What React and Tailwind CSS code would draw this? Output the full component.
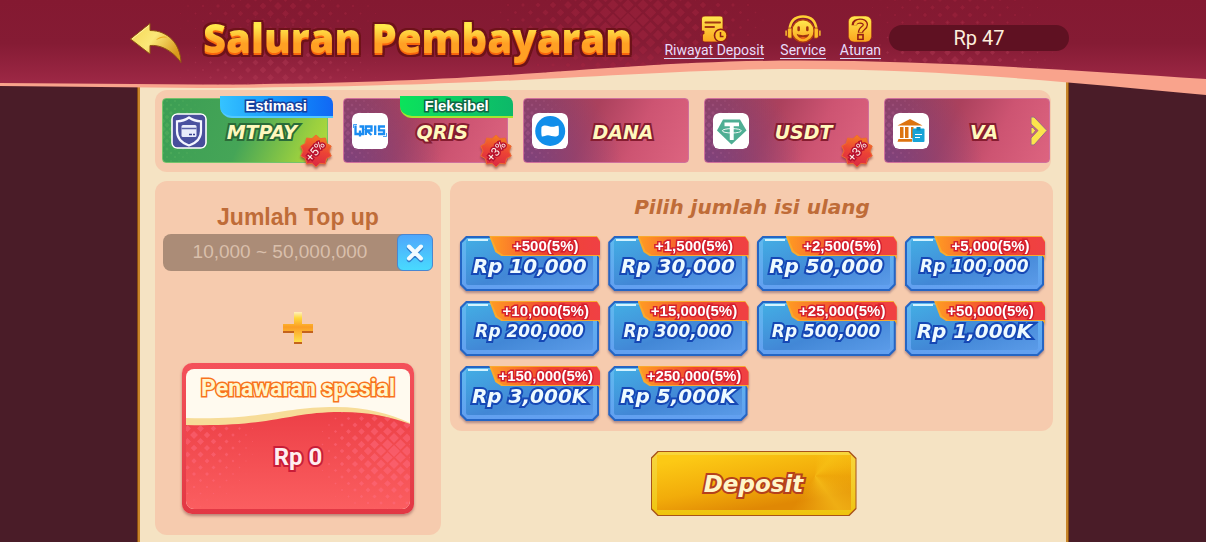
import { useState } from "react";
import clsx from "clsx";

const channels = [
    { name: "MTPAY", icon: ShieldIcon, tag: "Estimasi", bonus: "+5%", active: true },
    { name: "QRIS", icon: QrisIcon, tag: "Fleksibel", bonus: "+3%" },
    { name: "DANA", icon: DanaIcon },
    { name: "USDT", icon: UsdtIcon, bonus: "+3%" },
    { name: "VA", icon: BankIcon },
];

const amounts = [
    { label: "Rp 10,000", bonus: "+500(5%)" },
    { label: "Rp 30,000", bonus: "+1,500(5%)" },
    { label: "Rp 50,000", bonus: "+2,500(5%)" },
    { label: "Rp 100,000", bonus: "+5,000(5%)", small: true },
    { label: "Rp 200,000", bonus: "+10,000(5%)", small: true },
    { label: "Rp 300,000", bonus: "+15,000(5%)", small: true },
    { label: "Rp 500,000", bonus: "+25,000(5%)", small: true },
    { label: "Rp 1,000K", bonus: "+50,000(5%)" },
    { label: "Rp 3,000K", bonus: "+150,000(5%)" },
    { label: "Rp 5,000K", bonus: "+250,000(5%)" },
];

// Diamonds that shrink away from the centre of the cluster
function Diamonds({ cx, cy, rx, ry, step, max, color }) {
    const items = [];
    for (let row = -Math.ceil(ry / step) * 2; row <= Math.ceil(ry / step) * 2; row++) {
        for (let col = -Math.ceil(rx / step); col <= Math.ceil(rx / step); col++) {
            const x = cx + col * step + (row % 2 ? step / 2 : 0);
            const y = cy + (row * step) / 2;
            const r = max * (1 - Math.hypot((x - cx) / rx, (y - cy) / ry));
            if (r > 0.4) {
                items.push(<path key={`${row}:${col}`} d={`M${x} ${y - r}L${x + r} ${y}L${x} ${y + r}L${x - r} ${y}Z`} />);
            }
        }
    }
    return <g fill={color}>{items}</g>;
}

function ShieldIcon() {
    return (
        <svg viewBox="0 0 36 36" className="size-full">
            <rect x="1" y="1" width="34" height="34" rx="5" fill="#484e9b" stroke="#fff" strokeWidth="1.6" />
            <path d="M18 4.5C22 7.3 26 8.2 30 8.4V18C30 25 25.500 30 18 32.500C10.500 30 6 25 6 18V8.400C10 8.200 14 7.300 18 4.500Z" fill="#4a519f" stroke="#f4f5ff" strokeWidth="2.200" />
            <rect x="10.500" y="12" width="15" height="12" rx="1.500" fill="#e9ecfb" />
            <path d="M10.500 15.500H25.500" stroke="#5a61a8" strokeWidth="1.500" />
            <path d="M18 21.500H21M22 21.500H24" stroke="#3a4190" strokeWidth="1.400" />
        </svg>
    );
}

function QrisIcon() {
    return (
        <svg viewBox="0 0 36 36" className="size-full" fill="none" stroke="#1a8cf2">
            <rect width="36" height="36" rx="6" fill="#fff" stroke="none" />
            <path d="M1.500 15V11.500H5M34.500 20V23.500H31" strokeWidth="0.800" />
            <path d="M3.500 12.500V21H11V13.500H7.500M8 17.500V23.500" strokeWidth="2.300" />
            <path d="M13.800 22V13.500H19.500V17.500H14.500L19.500 22" strokeWidth="2.300" />
            <path d="M23.200 12.500V22M33 13.500H27V17.300H32V21H26" strokeWidth="2.300" />
        </svg>
    );
}

function DanaIcon() {
    return (
        <svg viewBox="0 0 36 36" className="size-full">
            <rect width="36" height="36" rx="6" fill="#fff" />
            <circle cx="18.200" cy="18" r="15" fill="#118eea" />
            <path d="M9.500 14C13 10.500 17 13.800 20.500 13.800C23 13.800 25 12.300 26.500 12.800C27 15 27 19.500 26.700 22C23.500 25.300 19.500 22.500 16 22.300C13.500 22.200 11.500 24 9.800 23.500C9.200 21 9.200 17 9.500 14Z" fill="#fff" />
        </svg>
    );
}

function UsdtIcon() {
    return (
        <svg viewBox="0 0 36 36" className="size-full">
            <rect width="36" height="36" rx="6" fill="#fff" />
            <path d="M10 6.500H27L33.500 17.500L18.500 31.500L4 17.500Z" fill="#4fae94" />
            <path d="M11.500 9.500H26V13.300H20.700V27H16.800V13.300H11.500Z" fill="#fff" />
            <ellipse cx="18.800" cy="17.800" rx="9.500" ry="2.200" fill="none" stroke="#fff" strokeWidth="0.900" />
        </svg>
    );
}

function BankIcon() {
    return (
        <svg viewBox="0 0 36 36" className="size-full" fill="#dd730f">
            <rect width="36" height="36" rx="6" fill="#fff" />
            <path d="M17 6L29.500 12.500H4.500Z" />
            <path d="M7 14H10.500V25H7ZM12 14H15.500V25H12ZM18 14H20.500V25H18ZM24 14H27V16H24ZM5.500 26H19V28.800H4.500Z" />
            <rect x="19.500" y="15.500" width="12" height="13.500" rx="1" fill="#17a3d6" />
            <path d="M23.500 14H27.500V17.500H23.500Z" fill="#0e86b8" />
            <path d="M22 21.500H29M22 24.500H27" stroke="#fff" strokeWidth="1" />
        </svg>
    );
}

function GoldGradient({ id }) {
    return (
        <linearGradient id={id} x1="0" y1="0" x2="0" y2="1">
            <stop offset="0" stopColor="#ffe94f" />
            <stop offset="1" stopColor="#fba41d" />
        </linearGradient>
    );
}

function HistoryIcon() {
    return (
        <svg viewBox="0 0 28 28" className="size-7">
            <defs><GoldGradient id="goldHistory" /></defs>
            <path d="M5 1H20C22 1 23 2 23 4V13.500L26 17L25.500 24L21 27H5C3 27 2.500 26 2.500 24V19H4V16H1.500V4C1.500 2 3 1 5 1Z" fill="url(#goldHistory)" stroke="#8a1616" strokeWidth="0.800" />
            <path d="M5.500 7.500H20M5.500 12H14" stroke="#a13a12" strokeWidth="2" strokeLinecap="round" />
            <circle cx="20.800" cy="20.500" r="6.300" fill="#ffc32c" stroke="#8f1f16" strokeWidth="1.600" />
            <path d="M20.500 17V21.500H23.500" fill="none" stroke="#8f1f16" strokeWidth="1.500" />
        </svg>
    );
}

function ServiceIcon() {
    return (
        <svg viewBox="0 0 38 29" className="h-7 w-[38px]">
            <defs><GoldGradient id="goldService" /></defs>
            <path d="M5 15C6 5 12 1.500 19 1.500S32 5 33 15" fill="none" stroke="#ffcf34" strokeWidth="2.600" />
            <circle cx="19" cy="16.500" r="11.500" fill="url(#goldService)" stroke="#b5410e" strokeWidth="1.200" />
            <path d="M5 13.500H7.500V24H5C3.500 24 3 23 3 21.500V16C3 14.500 3.500 13.500 5 13.500ZM33 13.500H30.500V24H33C34.500 24 35 23 35 21.500V16C35 14.500 34.500 13.500 33 13.500Z" fill="#ffbd29" stroke="#8f1f16" strokeWidth="0.700" />
            <path d="M1.500 16V21.500M36.500 16V21.500" stroke="#ffc52e" strokeWidth="1.500" />
            <path d="M14.500 13V15.500M23.500 13V15.500" stroke="#a1330f" strokeWidth="2.600" strokeLinecap="round" />
            <path d="M12.500 19.500C16 21.500 22 21.500 25.500 19.500C24.500 26 13.500 26 12.500 19.500Z" fill="#a1330f" />
            <path d="M15.500 23.500C18 22.500 20 22.500 22.500 23.500L19 25Z" fill="#f0631a" />
        </svg>
    );
}

function RulesIcon() {
    return (
        <svg viewBox="0 0 28 29" className="h-7 w-7">
            <defs><GoldGradient id="goldRules" /></defs>
            <rect x="2" y="1" width="24" height="27" rx="6" fill="url(#goldRules)" stroke="#9c2414" strokeWidth="0.600" />
            <path d="M8 10.500C8 5 19.500 5 19.500 10C19.500 14 14.500 13.500 14.500 18.500" fill="none" stroke="#951f14" strokeWidth="5.600" />
            <path d="M11 19.500H18V26H11Z" fill="#951f14" />
            <path d="M9 10.500C9 5 19.500 5 19.500 10C19.500 14 14.500 13.500 14.500 17.800" fill="none" stroke="#ffc634" strokeWidth="3" />
            <path d="M12.700 21.200H16.300V24.500H12.700Z" fill="#ffb52a" />
        </svg>
    );
}

function NavLink({ icon: Icon, children }) {
    return (
        <a href="#" className="flex flex-col items-center text-[14px] leading-[15px] whitespace-nowrap text-[#e8dcfa]">
            <Icon />
            <span className="border-b border-[#d6daf8]">{children}</span>
        </a>
    );
}

function Header() {
    return (
        <header className="relative z-10 h-24">
            <svg viewBox="0 0 1206 96" preserveAspectRatio="none" className="pointer-events-none absolute inset-0 size-full">
                <defs>
                    <linearGradient id="headerFill" x1="0" y1="0" x2="0" y2="1">
                        <stop offset="0" stopColor="#841931" />
                        <stop offset="0.450" stopColor="#851b34" />
                        <stop offset="1" stopColor="#a52c4b" />
                    </linearGradient>
                    <clipPath id="headerClip">
                        <path d="M0 0H1206V79C1060 69 930 61 800 60.500C600 61 520 84 200 84.500L0 83Z" />
                    </clipPath>
                </defs>
                <path d="M0 0H1206V95C1060 81 930 69 800 69C640 69 520 87 200 88L0 86Z" fill="#f9a38c" />
                <g clipPath="url(#headerClip)">
                    <rect width="1206" height="96" fill="url(#headerFill)" />
                    <g opacity="0.450">
                        <Diamonds cx={278} cy={6} rx={120} ry={60} step={15} max={4} color="#a52640" />
                        <Diamonds cx={278} cy={70} rx={110} ry={60} step={15} max={4} color="#b23a56" />
                        <Diamonds cx={628} cy={20} rx={150} ry={85} step={15} max={7} color="#a52640" />
                        <Diamonds cx={955} cy={15} rx={110} ry={50} step={15} max={3} color="#a52640" />
                        <Diamonds cx={955} cy={60} rx={110} ry={50} step={15} max={4} color="#b23a56" />
                    </g>
                </g>
            </svg>
            <div className="relative mx-auto flex w-full max-w-[946px] items-start pr-[7px]">
                <button type="button" aria-label="Kembali" className="mt-[22px] mr-[21px] shrink-0">
                    <svg viewBox="0 0 52 42" className="h-[42px] w-[52px]">
                        <defs>
                            <linearGradient id="backFill" x1="0" y1="0" x2="1" y2="0.600">
                                <stop offset="0" stopColor="#f3d653" />
                                <stop offset="0.500" stopColor="#fbe878" />
                                <stop offset="1" stopColor="#d99a1c" />
                            </linearGradient>
                        </defs>
                        <path d="M20 1.500L0.500 17L20 32V23.500C30 22.500 42 28 51 40.500C50.500 22 38 8.500 20 8.500Z" fill="url(#backFill)" stroke="#8f5313" strokeWidth="1" />
                        <path d="M26 18C30 14 35 14 37 15.500C31 15 29 17 26 18Z" fill="#eba91c" />
                        <path d="M19 3.500L2 17" stroke="#fff3a0" strokeWidth="1" />
                    </svg>
                </button>
                <h1 className="mt-2.5 bg-linear-to-b from-[#ffe94a] from-30% to-[#ffa024] to-60% bg-clip-text font-['Open_Sans'] text-[40px] leading-[56px] font-extrabold whitespace-nowrap text-transparent [filter:drop-shadow(0_2px_0_#f8660c)_drop-shadow(2px_0_0_#6e1219)_drop-shadow(-2px_0_0_#6e1219)_drop-shadow(0_2px_0_#6e1219)_drop-shadow(0_-2px_0_#6e1219)]">
                    Saluran Pembayaran
                </h1>
                <nav className="mt-[15px] ml-auto flex items-start">
                    <NavLink icon={HistoryIcon}>Riwayat Deposit</NavLink>
                    <div className="w-4" />
                    <NavLink icon={ServiceIcon}>Service</NavLink>
                    <div className="w-[14px]" />
                    <NavLink icon={RulesIcon}>Aturan</NavLink>
                </nav>
                <div className="mt-[25px] ml-2 h-[26px] w-[180px] shrink rounded-full bg-[#5f1122] text-center text-[20px] leading-[26px] text-[#fdeedd]">
                    Rp 47
                </div>
            </div>
        </header>
    );
}

function BonusBadge({ children }) {
    const points = Array.from({ length: 20 }, (_, i) => {
        const r = i % 2 ? 13 : 16;
        const a = (i * Math.PI) / 10;
        return `${17 + r * Math.sin(a)},${17 - r * Math.cos(a)}`;
    }).join(" ");

    return (
        <span className="absolute -right-1.5 -bottom-1.5 grid size-[34px] place-items-center drop-shadow-[0_2px_1px_#7a2a2a90]">
            <svg viewBox="0 0 34 34" className="absolute inset-0 size-full">
                <defs>
                    <linearGradient id="badgeFill" x1="0.600" y1="0" x2="0.400" y2="1">
                        <stop offset="0" stopColor="#f5801f" />
                        <stop offset="0.500" stopColor="#ec4335" />
                        <stop offset="1" stopColor="#d92745" />
                    </linearGradient>
                </defs>
                <polygon points={points} fill="url(#badgeFill)" strokeLinejoin="round" stroke="#ee6a30" strokeWidth="1" />
            </svg>
            <span className="relative -rotate-50 text-[12px] leading-none text-[#fff3ea] [-webkit-text-stroke:3px_#b9122f] [paint-order:stroke_fill]">
                {children}
            </span>
        </span>
    );
}

function ChannelCard({ channel, active, onClick }) {
    const Icon = channel.icon;
    return (
        <button
            type="button"
            onClick={onClick}
            className={clsx(
                "relative flex h-[65px] min-w-0 flex-1 items-center rounded-sm border pl-2 pr-2.5",
                active
                    ? "border-[#74c26a] bg-linear-[115deg,#3c9e54_0%,#45a557_50%,#9bd03f_85%,#b5dd3d_100%]"
                    : "border-[#d0709c] bg-[radial-gradient(circle_at_0%_110%,#7c427d_0%,#7c427d00_55%),linear-gradient(115deg,#95405f_10%,#ab415d_40%,#cd5472_68%,#dd6480_100%)]"
            )}
        >
            <svg viewBox="0 0 60 63" className="absolute bottom-0 left-0 h-full opacity-20">
                <Diamonds cx={0} cy={30} rx={50} ry={50} step={8} max={3} color={active ? "#7fd06f" : "#d67fae"} />
            </svg>
            <span className="relative size-9 shrink-0 overflow-hidden rounded-md">
                <Icon />
            </span>
            <span
                className={clsx(
                    "relative flex-1 pt-0.5 text-center font-['DejaVu_Sans'] text-[19px] leading-6 font-bold text-[#fff8bd] italic [paint-order:stroke_fill]",
                    active ? "[-webkit-text-stroke:4px_#2a6b38]" : "[-webkit-text-stroke:4px_#861c30]"
                )}
            >
                {channel.name}
            </span>
            {channel.tag && (
                <span
                    className={clsx(
                        "absolute -top-[3px] -right-1.5 h-[22px] w-[113px] rounded-tr-lg rounded-bl-xl border-b-2 text-center font-['Liberation_Sans'] text-[15px] leading-5 font-bold text-white [paint-order:stroke_fill]",
                        active
                            ? "border-[#52c8ff] bg-linear-to-r from-[#35c3ff] to-[#1267f4] [-webkit-text-stroke:3px_#153f9d]"
                            : "border-[#a4e62f] bg-linear-to-r from-[#0be35b] to-[#0db869] [-webkit-text-stroke:3px_#0e6743]"
                    )}
                >
                    {channel.tag}
                </span>
            )}
            {channel.bonus && <BonusBadge>{channel.bonus}</BonusBadge>}
        </button>
    );
}

function ChannelBar() {
    const [selected, setSelected] = useState("MTPAY");
    return (
        <section className="relative mr-0.5 flex gap-[15px] rounded-xl bg-[#f6cbae] pt-2 pr-px pb-[9px] pl-[7px]">
            {channels.map((channel) => (
                <ChannelCard
                    key={channel.name}
                    channel={channel}
                    active={selected === channel.name}
                    onClick={() => setSelected(channel.name)}
                />
            ))}
            <button type="button" aria-label="Berikutnya" className="absolute top-[26px] right-[3px]">
                <svg viewBox="0 0 18 30" className="h-[30px] w-[18px]" fill="#fbe44d" stroke="#9a6a86" strokeWidth="1">
                    <path d="M1 1H4L17 14.500L4 29H1V22L8 14.500L1 8Z" />
                    <path d="M1 11.500H3L5.500 14.500L3 18H1Z" />
                </svg>
            </button>
        </section>
    );
}

function TopUpPanel({ value, onChange }) {
    return (
        <section className="rounded-xl bg-[#f6cbae] px-2 pt-[22px] pb-[21px]">
            <label htmlFor="topup" className="block text-center font-['Liberation_Sans'] text-[23px] leading-7 font-bold text-[#bf6c38]">
                Jumlah Top up
            </label>
            <div className="mt-[3px] flex h-[37px] items-stretch rounded-lg bg-[#ab8c77]">
                <input
                    id="topup"
                    value={value}
                    onChange={(e) => onChange(e.target.value)}
                    placeholder="10,000 ~ 50,000,000"
                    className="min-w-0 flex-1 text-center font-['Liberation_Sans'] text-[19px] text-white outline-none placeholder:text-[#d9bfab]"
                />
                <button
                    type="button"
                    aria-label="Hapus"
                    onClick={() => onChange("")}
                    className="grid w-9 place-items-center rounded-md border border-[#4a86d0] bg-linear-to-b from-[#4ea6fb] to-[#48dafe]"
                >
                    <svg viewBox="0 0 20 20" className="size-5" strokeLinecap="round">
                        <path d="M4 5L16 17M16 5L4 17" stroke="#2f7ccb" strokeWidth="4.500" />
                        <path d="M4 3.500L16 15.500M16 3.500L4 15.500" stroke="#f2fbff" strokeWidth="4" />
                    </svg>
                </button>
            </div>
            <svg viewBox="0 0 32 34" className="mx-auto mt-10 h-[34px] w-8">
                <defs>
                    <linearGradient id="plusFill" x1="0" y1="0" x2="0" y2="1">
                        <stop offset="0" stopColor="#fff0c0" />
                        <stop offset="0.200" stopColor="#ffd83c" />
                        <stop offset="0.500" stopColor="#fb9d24" />
                        <stop offset="1" stopColor="#ffe04a" />
                    </linearGradient>
                </defs>
                <path d="M12 3H20V14H31V22H20V33H12V22H1V14H12Z" fill="#c4631c" />
                <path d="M12 1H20V13H31V20H20V31H12V20H1V13H12Z" fill="url(#plusFill)" />
            </svg>
            {/* Special offer */}
            <div className="mx-auto mt-[18px] w-full max-w-[232px] rounded-[10px] bg-linear-to-b from-[#f4515a] to-[#e23844] px-1 pt-1.5 pb-[5px] shadow-[0_2px_3px_#8a4a4a90]">
                <div className="relative flex h-[140px] flex-col items-center overflow-hidden rounded-lg bg-[#fffaef]">
                    <svg viewBox="0 0 224 140" preserveAspectRatio="none" className="absolute inset-0 size-full">
                        <defs>
                            <linearGradient id="offerFill" x1="0" y1="0" x2="0" y2="1">
                                <stop offset="0" stopColor="#ec3f46" />
                                <stop offset="1" stopColor="#fb5e60" />
                            </linearGradient>
                            <clipPath id="offerClip">
                                <path d="M0 56C90 58 100 43 155 43C185 43 205 48 224 55V140H0Z" />
                            </clipPath>
                        </defs>
                        <path d="M0 49C80 51 95 38 150 38C180 38 205 45 224 54V70H0Z" fill="#f7dc98" />
                        <g clipPath="url(#offerClip)">
                            <rect y="40" width="224" height="100" fill="url(#offerFill)" />
                            <g opacity="0.450">
                                <Diamonds cx={208} cy={82} rx={85} ry={75} step={13} max={6} color="#ff6f86" />
                                <Diamonds cx={8} cy={66} rx={70} ry={80} step={13} max={4} color="#ff6f86" />
                            </g>
                        </g>
                    </svg>
                    <h2 className="relative mt-1 text-[23px] leading-8 font-bold whitespace-nowrap text-[#fff6cb] [-webkit-text-stroke:3px_#f8731d] [paint-order:stroke_fill]">
                        Penawaran spesial
                    </h2>
                    <p className="relative mt-9 text-[24px] leading-8 font-bold text-[#ffeef0] [-webkit-text-stroke:4px_#c91d38] [paint-order:stroke_fill]">
                        Rp 0
                    </p>
                </div>
            </div>
        </section>
    );
}

function AmountButton({ item, onClick }) {
    return (
        <button type="button" onClick={onClick} className="relative h-[55px] drop-shadow-[0_2px_1px_#7a5a6a90]">
            <span className="absolute inset-0 bg-[#2465c4] [clip-path:polygon(6px_0,calc(100%-6px)_0,100%_6px,100%_calc(100%-6px),calc(100%-6px)_100%,6px_100%,0_calc(100%-6px),0_6px)]" />
            <span className="absolute inset-[2px] bg-linear-to-b from-[#5fb9ee] to-[#629ff0] [clip-path:polygon(5px_0,calc(100%-5px)_0,100%_5px,100%_calc(100%-5px),calc(100%-5px)_100%,5px_100%,0_calc(100%-5px),0_5px)]" />
            <span className="absolute inset-x-1.5 top-1 bottom-1.5 rounded-xs bg-linear-[160deg,#43ade4_0%,#4287d6_55%,#5b9be8_100%]" />
            <span className="absolute top-[3px] left-2 h-[2px] w-5 bg-[#d4f3ff]" />
            <span
                className={clsx(
                    "absolute inset-x-0 top-5 text-center font-['DejaVu_Sans'] leading-5 font-bold whitespace-nowrap text-[#eefaff] italic [-webkit-text-stroke:4px_#1648b5] [paint-order:stroke_fill]",
                    item.small ? "text-[17px]" : "text-[20px]"
                )}
            >
                {item.label}
            </span>
            <span className="absolute top-0 -right-px h-[23px] w-[111px] bg-[#f8a92e] [clip-path:polygon(0_0,97%_0,100%_5px,100%_100%,98%_20px,12px_20px,6px_16px)]" />
            <span className="absolute top-px -right-px h-[18px] w-[109px] bg-linear-to-r from-[#ff9a22] via-[#f0442f] to-[#f04044] text-center font-['Liberation_Sans'] text-[15px] leading-[18px] font-bold text-white [clip-path:polygon(0_0,97%_0,100%_5px,100%_100%,12px_100%,6px_14px)]">
                <span className="[-webkit-text-stroke:3px_#d4202f] [paint-order:stroke_fill]">{item.bonus}</span>
            </span>
        </button>
    );
}

function AmountPanel({ onPick }) {
    return (
        <section className="rounded-xl bg-[#f6cbae] pt-3 pr-[9px] pb-2.5 pl-2.5">
            <h2 className="text-center font-['DejaVu_Sans'] text-[20px] leading-7 font-bold text-[#bf6c38] italic">
                Pilih jumlah isi ulang
            </h2>
            <div className="mt-[15px] grid grid-cols-4 gap-x-[9px] gap-y-2.5">
                {amounts.map((item) => (
                    <AmountButton key={item.label} item={item} onClick={() => onPick(item.label)} />
                ))}
            </div>
        </section>
    );
}

function DepositButton() {
    return (
        <button type="button" className="relative mt-5 ml-1 h-[65px] w-[206px]">
            <span className="absolute inset-0 bg-[#a8521a] [clip-path:polygon(7px_0,calc(100%-7px)_0,100%_7px,100%_calc(100%-7px),calc(100%-7px)_100%,7px_100%,0_calc(100%-7px),0_7px)]" />
            <span className="absolute inset-px bg-linear-to-b from-[#f8d63c] to-[#efc40a] [clip-path:polygon(7px_0,calc(100%-7px)_0,100%_7px,100%_calc(100%-7px),calc(100%-7px)_100%,7px_100%,0_calc(100%-7px),0_7px)]" />
            <span className="absolute inset-x-1.5 top-1 bottom-1.5 bg-linear-[170deg,#fcc915_10%,#f2ac0a_50%,#e08804_80%]" />
            <span className="absolute top-1 right-1.5 bottom-1.5 w-20 bg-[conic-gradient(from_0deg_at_55%_38%,#f7bf1400,#f9c61890_12%,#f2b20c40_25%,#fbcb2090_40%,#e1960500_60%,#f7bf1400)]" />
            <span className="relative font-['DejaVu_Sans'] text-[23px] leading-8 font-bold text-[#fff6c8] italic [-webkit-text-stroke:4px_#b5401c] [paint-order:stroke_fill]">
                Deposit
            </span>
        </button>
    );
}

export default function App() {
    const [amount, setAmount] = useState("");

    return (
        <div className="flex min-h-screen flex-col bg-[#4a1c28] font-[Roboto,sans-serif]">
            <Header />
            <main className="mx-auto -mt-9 flex w-full max-w-[932px] flex-1 border-x border-[#8a4d12] bg-[#c8852a] px-[2px]">
                <div className="min-w-0 flex-1 bg-[#f5e3c3] pt-[30px] pr-[13px] pb-[7px] pl-[15px]">
                    <ChannelBar />
                    <div className="mt-[9px] grid grid-cols-[minmax(0,286fr)_minmax(0,603fr)] gap-[9px]">
                        <TopUpPanel value={amount} onChange={setAmount} />
                        <div className="flex flex-col">
                            <AmountPanel onPick={(label) => setAmount(label.replace("Rp ", "").replace("K", ",000"))} />
                            <div className="text-center">
                                <DepositButton />
                            </div>
                        </div>
                    </div>
                </div>
            </main>
        </div>
    );
}
